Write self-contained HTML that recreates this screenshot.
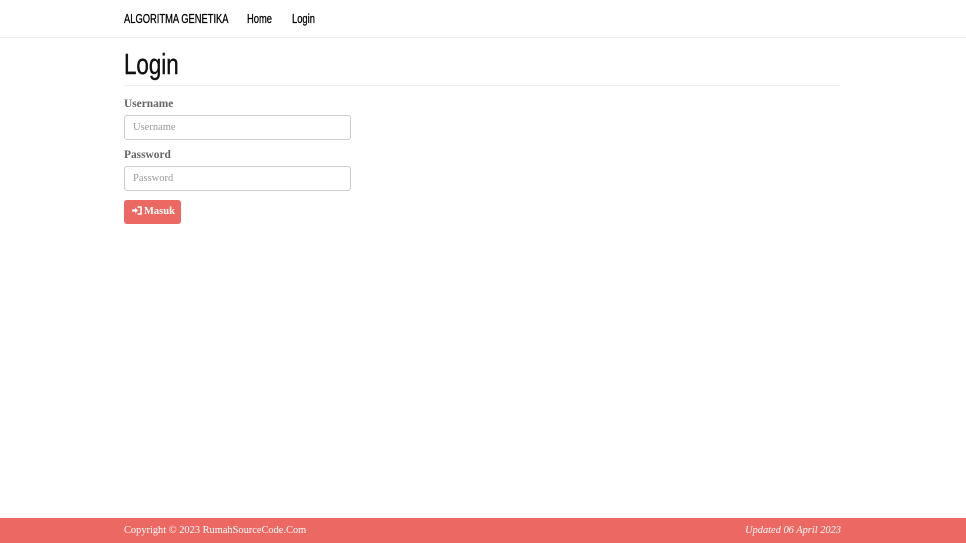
<!DOCTYPE html>
<html><head><meta charset="utf-8"><style>
body{margin:0;width:966px;height:543px;position:relative;background:#fff;font-family:"Liberation Serif",serif;overflow:hidden}
.nav{position:absolute;left:0;top:0;width:966px;height:37px;border-bottom:1px solid #eee;}
.nav span{position:absolute;top:11px;font-family:"Liberation Sans",sans-serif;font-size:13px;color:#000;transform:scaleX(0.72);transform-origin:0 0;white-space:nowrap;-webkit-text-stroke:0.3px #000}
h1{position:absolute;left:124px;top:49px;margin:0;font-family:"Liberation Sans",sans-serif;font-weight:normal;font-size:29px;color:#111;transform:scaleX(0.77);transform-origin:0 0;-webkit-text-stroke:0.4px #111}
.hr{position:absolute;left:124px;top:85px;width:716px;border-top:1px solid #eee}
.lbl{position:absolute;left:124px;font-size:11.4px;font-weight:bold;color:#666}
.inp{position:absolute;left:124px;border:1px solid #ccc;border-radius:3px;font-size:10.5px;color:#999;line-height:23px;padding-left:8px;box-sizing:border-box;width:227px;height:25px}
.btn{position:absolute;left:124px;top:200px;width:57px;height:24px;background:#ec6863;border-radius:3px;color:#fff;font-size:10.5px;font-weight:bold;line-height:24px;box-sizing:border-box;padding-left:8px;white-space:nowrap}
.foot{position:absolute;left:0;top:518px;width:966px;height:25px;background:#ec6863;color:#fff;font-size:10.4px}
.foot span{position:absolute;top:7px}
</style></head><body>
<div class="nav"><span style="left:124px">ALGORITMA GENETIKA</span><span style="left:247px">Home</span><span style="left:292px">Login</span></div>
<h1>Login</h1><div class="hr"></div>
<div class="lbl" style="top:98px">Username</div>
<div class="inp" style="top:115px">Username</div>
<div class="lbl" style="top:149px">Password</div>
<div class="inp" style="top:166px">Password</div>
<div class="btn"><svg width="11" height="9" viewBox="0 0 11 9" style="vertical-align:-1px;margin-right:1px"><path d="M0 3.5h3V1.5l3 3-3 3V5.5H0z" fill="#fff"/><path d="M5.5 1H9v7H5.5" fill="none" stroke="#fff" stroke-width="1.5"/></svg>Masuk</div>
<div class="foot"><span style="left:124px">Copyright © 2023 RumahSourceCode.Com</span><span style="right:125px;font-style:italic">Updated 06 April 2023</span></div>
</body></html>
